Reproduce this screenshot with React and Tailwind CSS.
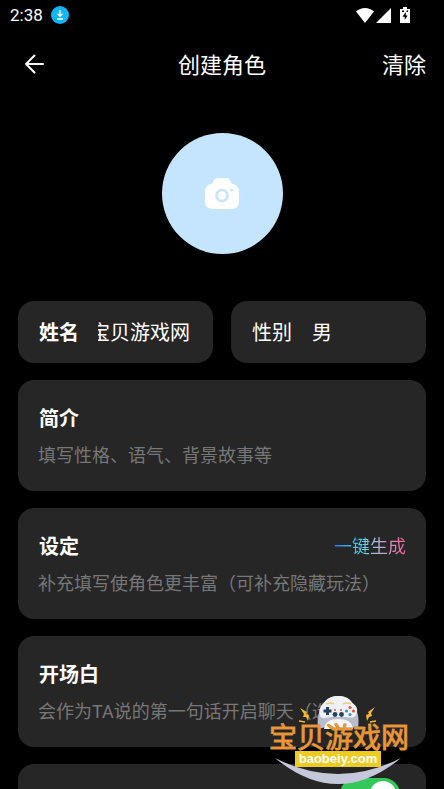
import { useState } from 'react';

const FONT = "font-['Roboto','Noto_Sans_CJK_SC',sans-serif]";

// Iconos de la barra de estado
function StatusBar() {
  return (
    <div className="flex h-[30px] items-center justify-between pl-2.5 pr-[34px]">
      <div className="flex items-center gap-2">
        <span className="text-[17px] leading-5">2:38</span>
        <svg className="size-[18px]" viewBox="0 0 18 18" fill="none">
          <circle cx="9" cy="9" r="9" fill="#0fb5f5" />
          <path d="M9 4v6M6.5 7.8L9 10.3l2.5-2.5M6 13h6" stroke="#fff" strokeWidth="1.3" />
        </svg>
      </div>
      <div className="flex items-center gap-0.5">
        <svg className="h-[15px] w-[18px]" viewBox="0 0 18 15" fill="#fff">
          <path d="M0 3.6C5-1.2 13-1.2 18 3.6L9 15z" />
        </svg>
        <svg className="h-[15px] w-[15px]" viewBox="0 0 15 15" fill="#fff">
          <path d="M15 0v15H0z" />
        </svg>
        <svg className="ml-[7px] h-4 w-[10px]" viewBox="0 0 10 16">
          <path d="M3 0h4v2h3v14H0V2h3z" fill="#fff" />
          <path d="M5.8 5L2.5 9.8h2.2V13l3-4.6H5.8zM2 3.5h2V5H2zM6.5 3.5H8V5H6.5z" fill="#000" />
        </svg>
      </div>
    </div>
  );
}

function Header({ onClear }) {
  return (
    <header className="grid h-[68px] grid-cols-3 items-center px-[18px]">
      <button type="button" aria-label="返回" className="justify-self-start p-1.5">
        <svg className="size-5" viewBox="0 0 20 20" fill="none" stroke="#fff" strokeWidth="2" strokeLinecap="round" strokeLinejoin="round">
          <path d="M19 10H2M10.5 1.5L2 10l8.5 8.5" />
        </svg>
      </button>
      <h1 className="pt-1 text-center text-[22px] leading-8">创建角色</h1>
      <button type="button" onClick={onClear} className="justify-self-end pt-1 text-[22px] leading-8">
        清除
      </button>
    </header>
  );
}

function Field({ id, label, placeholder, action }) {
  return (
    <section className="h-[111px] rounded-2xl bg-[#262626] px-5 pt-[25px]">
      <div className="flex items-center justify-between">
        <label htmlFor={id} className="pl-px text-[20px] font-bold leading-7">{label}</label>
        {action}
      </div>
      <input
        id={id}
        placeholder={placeholder}
        className="mt-2 h-7 w-full bg-transparent text-[18px] outline-none placeholder:text-[#777777]"
      />
    </section>
  );
}

function Watermark() {
  return (
    <div className="pointer-events-none absolute left-[268px] top-[694px] h-[95px] w-[144px]">
      <svg className="h-full w-full" viewBox="0 0 144 95">
        {/* Sonrisa */}
        <path d="M7 64Q70 96 133 64Q70 116 7 64z" fill="#c5c7da" />
        {/* Mando */}
        <path d="M50 35C49 26 50 20 53 14C57 5 63 2 70 2C78 2 84 5 87 14C91 20 91 27 90 35L83 33H58z" fill="#b9becf" />
        <path d="M52 22C50 15 53 11 56 9C59 4 64 2 70 2C77 2 81 4 84 9C88 11 91 15 88 21C86 25 81 23 77 23H64C60 23 55 26 52 22z" fill="#f0f1f5" />
        <path d="M56 35C57 28 62 25 70 25C79 25 84 28 85 35z" fill="#f6f6f8" />
        <path d="M58 10q4-2 8 0M75 10q4-2 8 0" stroke="#e9cf78" strokeWidth="1.5" fill="none" />
        <path d="M55.5 17h8M59.5 13v8" stroke="#24415d" strokeWidth="3" />
        <circle cx="82" cy="13.5" r="1.6" fill="#e95445" />
        <circle cx="78.5" cy="17" r="1.6" fill="#3697cc" />
        <circle cx="85.5" cy="17" r="1.6" fill="#e95445" />
        <circle cx="82" cy="20.5" r="1.6" fill="#3697cc" />
        <circle cx="67" cy="16" r="1" fill="#e95445" />
        <circle cx="73" cy="16" r="1" fill="#e95445" />
        <circle cx="67" cy="20.5" r="2.4" fill="#24415d" />
        <circle cx="73.5" cy="20.5" r="2.4" fill="#24415d" />
        {/* Rayos */}
        <path d="M32 14l7 4-1 2 3 1-1 6-2-4-3 0 1-3z" fill="#f4ba28" />
        <path d="M107 13l-7 5 1 2-3 1 1 6 2-4 3-1-1-3z" fill="#f4ba28" />
        <path d="M31 27l6 1M102 28l6-1" stroke="#f4ba28" strokeWidth="1.5" />
        <rect x="27" y="57" width="86" height="16" fill="#edcb20" />
        <text x="71" y="54" textAnchor="middle" fontSize="28" fontWeight="400" fill="#f0962c" stroke="#c08a50" strokeWidth="1" paintOrder="stroke" fontFamily="Liberation Sans, Noto Sans CJK SC, sans-serif">宝贝游戏网</text>
        <text x="70" y="69" textAnchor="middle" fontSize="13" fontWeight="600" fill="#fff" fontFamily="Liberation Sans, sans-serif">baobeiy.com</text>
      </svg>
    </div>
  );
}

export default function App() {
  const [name, setName] = useState('宝贝游戏网');
  const [open, setOpen] = useState(true);

  return (
    <div className={`relative h-screen overflow-hidden bg-black text-white ${FONT}`}>
      <StatusBar />
      <Header onClear={() => setName('')} />

      {/* Avatar */}
      <div className="flex justify-center pt-[35px]">
        <button type="button" aria-label="上传头像" className="flex size-[121px] items-center justify-center rounded-full bg-[#c5e5ff]">
          <svg className="h-[31px] w-[34px]" viewBox="0 0 34 31">
            <path d="M13 0h8q4 0 5.5 5.5Q34 7 34 14v9q0 8-8 8H8q-8 0-8-8v-9Q0 7 7.5 5.5Q9 0 13 0z" fill="#fff" />
            <circle cx="17" cy="17.5" r="5.5" fill="none" stroke="#c5e5ff" strokeWidth="2.6" />
            <circle cx="26.5" cy="12" r="1.5" fill="#c5e5ff" />
          </svg>
        </button>
      </div>

      <main className="flex flex-col gap-[17px] px-[18px] pt-[47px]">
        <div className="grid grid-cols-2 gap-[18px]">
          <div className="flex h-[62px] items-center rounded-2xl bg-[#262626] px-[21px] pt-0.5">
            <label htmlFor="name" className="shrink-0 text-[20px] font-bold">姓名</label>
            <div className="ml-[19px] mr-0.5 flex min-w-0 flex-1 justify-end overflow-hidden">
              <input
                id="name"
                value={name}
                onChange={(e) => setName(e.target.value)}
                className="w-[100px] shrink-0 bg-transparent text-[20px] outline-none"
              />
            </div>
          </div>
          <div className="flex h-[62px] items-center gap-5 rounded-2xl bg-[#262626] px-[21px] pt-0.5">
            <label htmlFor="gender" className="text-[20px]">性别</label>
            <select id="gender" className="appearance-none bg-transparent text-[20px] outline-none">
              <option>男</option>
              <option>女</option>
            </select>
          </div>
        </div>

        <Field id="intro" label="简介" placeholder="填写性格、语气、背景故事等" />
        <Field
          id="setting"
          label="设定"
          placeholder="补充填写使角色更丰富（可补充隐藏玩法）"
          action={
            <button type="button" className="bg-linear-to-r from-[#2979f2] via-[#5bd7ee] via-40% to-[#f05a9c] bg-clip-text text-[18px] leading-7 text-transparent">
              一键生成
            </button>
          }
        />
        <Field id="opening" label="开场白" placeholder="会作为TA说的第一句话开启聊天（选填）" />

        <section className="flex h-[80px] items-start justify-between rounded-2xl bg-[#262626] pl-5 pr-[26px] pt-3.5">
          <label htmlFor="public" className="pt-1.5 text-[18px] leading-7 text-[#777777]">公开</label>
          <input
            id="public"
            type="checkbox"
            role="switch"
            checked={open}
            onChange={(e) => setOpen(e.target.checked)}
            className="h-8 w-[60px] appearance-none rounded-full bg-[#34c759] after:ml-auto after:mr-1 after:mt-[3px] after:block after:size-[26px] after:rounded-full after:bg-white"
          />
        </section>
      </main>

      <Watermark />
    </div>
  );
}
